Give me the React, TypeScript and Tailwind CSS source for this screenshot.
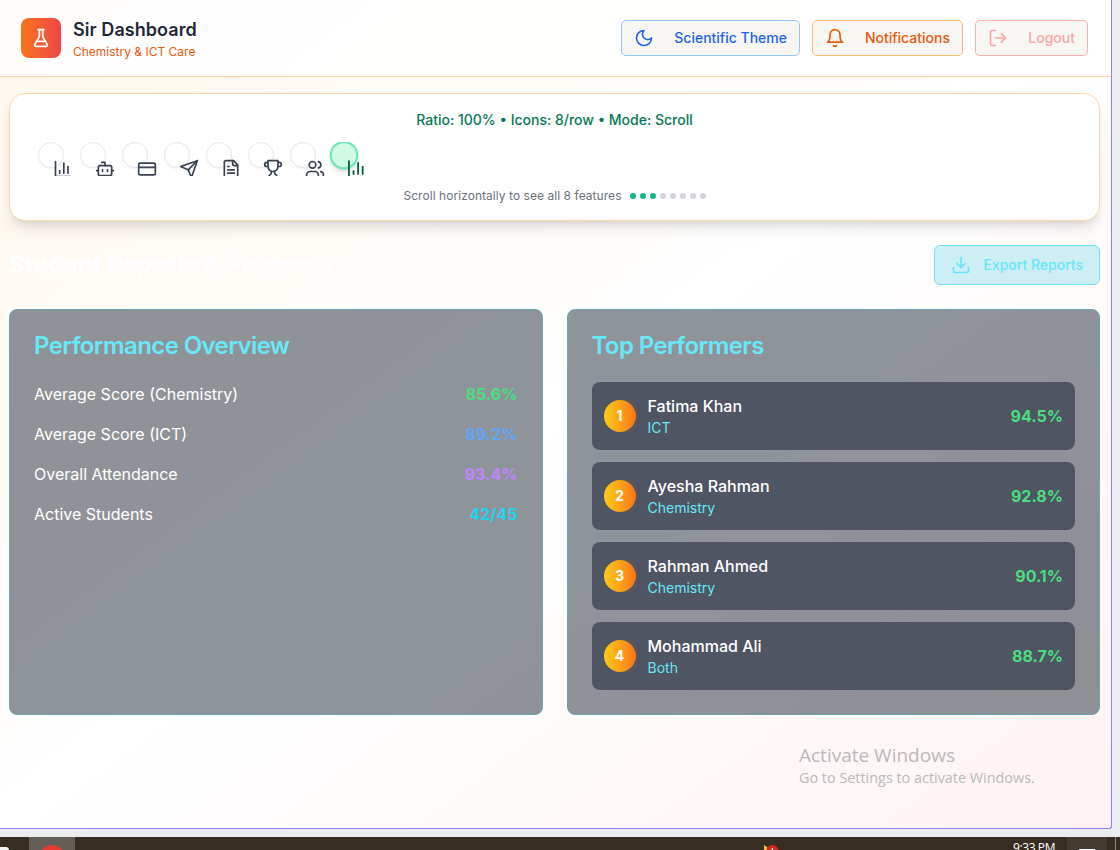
import React from "react";

type IconProps = { className?: string };

const Svg = ({ className = "", sw = 2, children }: { className?: string; sw?: number; children: React.ReactNode }) => (
  <svg viewBox="0 0 24 24" fill="none" stroke="currentColor" strokeWidth={sw} strokeLinecap="round" strokeLinejoin="round" className={`shrink-0 ${className}`}>
    {children}
  </svg>
);

const BarChart = ({ className }: IconProps) => (
  <Svg className={className}><path d="M3 3v18h18" /><path d="M18 17V9" /><path d="M13 17V5" /><path d="M8 17v-3" /></Svg>
);
const Bot = ({ className }: IconProps) => (
  <Svg className={className}><path d="M12 8V4H8" /><rect width="16" height="12" x="4" y="8" rx="2" /><path d="M2 14h2" /><path d="M20 14h2" /><path d="M15 13v2" /><path d="M9 13v2" /></Svg>
);
const Card = ({ className }: IconProps) => (
  <Svg className={className}><rect width="20" height="14" x="2" y="5" rx="2" /><path d="M2 10h20" /></Svg>
);
const Send = ({ className }: IconProps) => (
  <Svg className={className}><path d="m22 2-7 20-4-9-9-4Z" /><path d="M22 2 11 13" /></Svg>
);
const FileText = ({ className }: IconProps) => (
  <Svg className={className}><path d="M15 2H6a2 2 0 0 0-2 2v16a2 2 0 0 0 2 2h12a2 2 0 0 0 2-2V7Z" /><path d="M14 2v4a2 2 0 0 0 2 2h4" /><path d="M10 9H8" /><path d="M16 13H8" /><path d="M16 17H8" /></Svg>
);
const Trophy = ({ className }: IconProps) => (
  <Svg className={className}><path d="M6 9H4.5a2.5 2.5 0 0 1 0-5H6" /><path d="M18 9h1.5a2.5 2.5 0 0 0 0-5H18" /><path d="M4 22h16" /><path d="M10 14.66V17c0 .55-.47.98-.97 1.21C7.85 18.75 7 20.24 7 22" /><path d="M14 14.66V17c0 .55.47.98.97 1.21C16.15 18.75 17 20.24 17 22" /><path d="M18 2H6v7a6 6 0 0 0 12 0V2Z" /></Svg>
);
const Users = ({ className }: IconProps) => (
  <Svg className={className}><path d="M16 21v-2a4 4 0 0 0-4-4H6a4 4 0 0 0-4 4v2" /><circle cx="9" cy="7" r="4" /><path d="M22 21v-2a4 4 0 0 0-3-3.87" /><path d="M16 3.13a4 4 0 0 1 0 7.75" /></Svg>
);
const Moon = ({ className }: IconProps) => (
  <Svg className={className}><path d="M12 3a6 6 0 0 0 9 9 9 9 0 1 1-9-9Z" /></Svg>
);
const Bell = ({ className }: IconProps) => (
  <Svg className={className}><path d="M6 8a6 6 0 0 1 12 0c0 7 3 9 3 9H3s3-2 3-9" /><path d="M10.3 21a1.94 1.94 0 0 0 3.4 0" /></Svg>
);
const LogOut = ({ className }: IconProps) => (
  <Svg className={className}><path d="M9 21H5a2 2 0 0 1-2-2V5a2 2 0 0 1 2-2h4" /><path d="m16 17 5-5-5-5" /><path d="M21 12H9" /></Svg>
);
const Download = ({ className }: IconProps) => (
  <Svg className={className}><path d="M21 15v4a2 2 0 0 1-2 2H5a2 2 0 0 1-2-2v-4" /><path d="m7 10 5 5 5-5" /><path d="M12 15V3" /></Svg>
);
const Flask = ({ className }: IconProps) => (
  <Svg className={className}><path d="M10 2v7.31" /><path d="M14 9.3V2" /><path d="M8.5 2h7" /><path d="M14 9.3a6.5 6.5 0 0 0 .6 2.1L19.500 20a1.4 1.4 0 0 1-1.200 2H5.700a1.400 1.400 0 0 1-1.200-2L9.400 11.400A6.500 6.500 0 0 0 10 9.300" /><path d="M6.5 16h11" /></Svg>
);

const features = [BarChart, Bot, Card, Send, FileText, Trophy, Users];

const stats = [
  { label: "Average Score (Chemistry)", value: "85.6%", color: "text-[#4ade80]" },
  { label: "Average Score (ICT)", value: "89.2%", color: "text-[#60a5fa]" },
  { label: "Overall Attendance", value: "93.4%", color: "text-[#c084fc]" },
  { label: "Active Students", value: "42/45", color: "text-[#22d3ee]" },
];

const performers = [
  { name: "Fatima Khan", subject: "ICT", score: "94.5%" },
  { name: "Ayesha Rahman", subject: "Chemistry", score: "92.8%" },
  { name: "Rahman Ahmed", subject: "Chemistry", score: "90.1%" },
  { name: "Mohammad Ali", subject: "Both", score: "88.7%" },
];

function Header() {
  return (
    <header className="flex h-[77px] shrink-0 items-center justify-between border-b border-[#fed7aa] bg-white/90 pr-[23px] pl-[21px] shadow-xs">
      <div className="flex items-center gap-3">
        <div className="flex size-10 items-center justify-center rounded-lg bg-linear-to-r from-[#f97316] to-[#ef4444] text-white">
          <Flask className="size-5" />
        </div>
        <div className="pt-1">
          <h1 className="text-lg leading-[22px] font-semibold tracking-[0.06px] text-[#1f2937]">Sir Dashboard</h1>
          <p className="mt-px text-xs leading-5 text-[#ea580c]">Chemistry &amp; ICT Care</p>
        </div>
      </div>
      <div className="flex gap-3 text-sm font-medium">
        <button className="flex h-9 w-[179px] items-center justify-between rounded-[5px] border border-[#93c5fd] bg-[#f8f6f3] px-3 text-[#2563eb]">
          <Moon className="size-5" />Scientific Theme
        </button>
        <button className="flex h-9 w-[151px] items-center justify-between rounded-[5px] border border-[#fdba74] bg-[#f8f6f3] px-3 text-[#ea580c]">
          <Bell className="size-5" />Notifications
        </button>
        <button className="flex h-9 w-[113px] items-center justify-between rounded-[5px] border border-[#fca5a5]/90 bg-[#f8f6f3] px-3 text-[#fca5a5]">
          <LogOut className="size-5" />Logout
        </button>
      </div>
    </header>
  );
}

function FeatureBar() {
  return (
    <section className="h-32 rounded-[16px] border border-[#fed7aa] bg-white shadow-[0_10px_15px_-3px_rgba(0,0,0,0.12),0_4px_6px_-4px_rgba(0,0,0,0.1)]">
      <p className="pt-4 text-center text-sm font-medium leading-5 text-[#047857]">Ratio: 100% • Icons: 8/row • Mode: Scroll</p>
      <div className="mt-3 ml-7 flex h-[34px] gap-4 overflow-hidden">
        {features.map((Icon, i) => (
          <div key={i} className="size-[26px] shrink-0 rounded-full border border-[#e5e7eb] bg-white pt-4 pl-3.5 text-[#374151] shadow-xs">
            <Icon className="size-5" />
          </div>
        ))}
        <div className="-ml-px size-[26px] shrink-0 origin-[50%_44%] scale-110 rounded-full border-2 border-[#6ee7b7] bg-[#d1fae5] pt-3.5 pl-[13px] text-[#065f46] shadow-md">
          <BarChart className="size-5" />
        </div>
      </div>
      <div className="mt-3 flex items-center justify-center gap-2">
        <span className="text-xs leading-4 tracking-[0.05px] text-[#6b7280]">Scroll horizontally to see all 8 features</span>
        <span className="flex gap-1">
          {Array.from({ length: 8 }, (_, i) => (
            <i key={i} className={i < 3 ? "size-1.5 rounded-full bg-[#10b981]" : "size-1.5 rounded-full bg-[#d1d5db]"} />
          ))}
        </span>
      </div>
    </section>
  );
}

const panel = "h-[406px] rounded-lg border border-[#67a6b1] bg-[#1f2937]/50 p-6";
const panelTitle = "text-2xl leading-none font-semibold tracking-tight text-[#67e8f9]";

export default function App() {
  return (
    <div className="relative h-[850px] w-[1120px] overflow-hidden bg-[#ebecee] font-['Inter',sans-serif]">
      <div className="flex h-[829px] w-[1112px] flex-col overflow-hidden rounded-br-[3px] border-r border-b border-[#977df5] bg-linear-to-br from-[#fff7ed] via-white to-[#fef2f2]">
        <Header />
        <main className="flex flex-col pt-4 pr-[11px] pl-[9px]">
          <FeatureBar />
          <div className="mt-6 flex h-10 items-center justify-between">
            <h2 className="text-2xl leading-8 font-bold text-white">Student Reports &amp; Progress</h2>
            <button className="flex h-10 w-[166px] items-center justify-between rounded-md border border-[#75e1f0] bg-[#cdeef4] px-4 text-sm font-medium text-[#67e8f9]">
              <Download className="size-5" />Export Reports
            </button>
          </div>
          <div className="mt-6 grid grid-cols-2 gap-6">
            <section className={panel}>
              <h3 className={panelTitle}>Performance Overview</h3>
              <div className="mt-6 flex flex-col gap-4">
                {stats.map((s) => (
                  <div key={s.label} className="flex justify-between text-base leading-6">
                    <span className="text-white">{s.label}</span>
                    <span className={`font-bold ${s.color}`}>{s.value}</span>
                  </div>
                ))}
              </div>
            </section>
            <section className={panel}>
              <h3 className={panelTitle}>Top Performers</h3>
              <div className="mt-6 flex flex-col gap-3">
                {performers.map((p, i) => (
                  <div key={p.name} className="flex h-[68px] items-center rounded-lg bg-[#4f5562] px-3">
                    <div className="flex size-8 items-center justify-center rounded-full bg-linear-to-r from-[#facc15] to-[#f97316] text-sm font-bold text-white">{i + 1}</div>
                    <div className="ml-3 flex-1">
                      <div className="text-base leading-6 font-medium text-white">{p.name}</div>
                      <div className="text-sm leading-5 text-[#67e8f9]">{p.subject}</div>
                    </div>
                    <div className="font-bold text-[#4ade80]">{p.score}</div>
                  </div>
                ))}
              </div>
            </section>
          </div>
        </main>
      </div>

      <div className="absolute top-[742px] left-[799px] font-['Open_Sans','Noto_Sans',sans-serif] whitespace-nowrap text-[#bcb9ba]">
        <div className="text-[19px] leading-[26px]">Activate Windows</div>
        <div className="text-[14.4px] leading-5">Go to Settings to activate Windows.</div>
      </div>

      <footer className="relative mt-2 flex h-[13px] overflow-hidden bg-[#372d22]">
        <svg className="h-[13px] w-7 shrink-0" viewBox="0 0 28 13"><path d="M0 10h7l2 2v1H0z" fill="#f4f4f4" /></svg>
        <div className="ml-px flex h-[13px] w-[46px] shrink-0 justify-center overflow-hidden bg-[#655e56]">
          <div className="mt-2 size-6 shrink-0 rounded-full bg-[#e53b2d]" />
        </div>
        <svg className="ml-[688px] h-[13px] w-5 shrink-0" viewBox="0 0 20 13"><path d="M1 8l3 2 2 3H1z" fill="#f5b932" /><circle cx="9.500" cy="14" r="6" fill="#c9291f" /><path d="M8.500 12l1-1v2" stroke="#fff" fill="none" /></svg>
        <span className="ml-[230px] h-[13px] w-[44px] font-['Open_Sans','Noto_Sans',sans-serif] text-[12px] leading-[22px] tracking-[-0.4px] whitespace-nowrap text-white">9:33 PM</span>
        <div className="ml-[10px] flex w-10 shrink-0 justify-center bg-[#443a30]"><div className="mt-3 h-px w-4 bg-white" /></div>
        <div className="ml-2 w-px shrink-0 bg-[#8b857e]" />
      </footer>
    </div>
  );
}
